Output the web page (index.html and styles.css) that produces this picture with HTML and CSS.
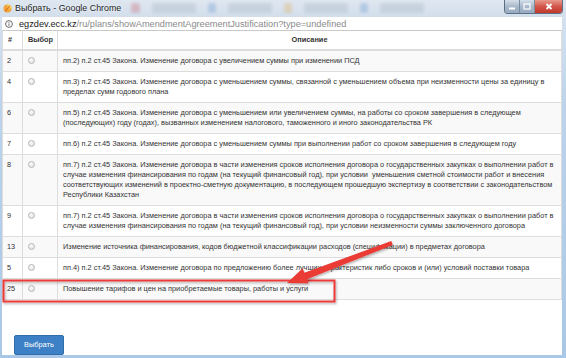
FILE: index.html
```html
<!DOCTYPE html>
<html lang="ru">
<head>
  <meta charset="UTF-8" />
  <title>Выбрать - Google Chrome</title>
  <link rel="stylesheet" href="styles.css">
</head>
<body>
  <div class="window">

    <!-- заголовок окна -->
    <div class="titlebar">
      <svg class="app-icon" width="9" height="9" viewBox="0 0 9 9">
        <circle cx="4.5" cy="4.5" r="4" fill="#f3a53a"/>
        <path d="M4.5 0.5 A4 4 0 0 1 8.5 4.5 L4.5 4.5 Z" fill="#fbd56a"/>
        <path d="M2 7.5 L6.8 1.8" stroke="#e07a1f" stroke-width="1.2"/>
      </svg>
      <span class="title">Выбрать - Google Chrome</span>
      <div class="glass">
        <span class="blob blob-red"></span>
        <span class="blob blob-tab"></span>
        <span class="blob blob-blue"></span>
        <span class="blob blob-tab"></span>
        <span class="blob blob-orange"></span>
        <span class="blob blob-tab"></span>
        <span class="blob blob-blue"></span>
        <span class="blob blob-tab"></span>
      </div>
      <div class="controls">
        <span class="ctl ctl-min">
          <svg width="8" height="6" viewBox="0 0 8 6"><rect x="1" y="3.5" width="6" height="2" fill="#fff"/></svg>
        </span>
        <span class="ctl ctl-max">
          <svg width="8" height="7" viewBox="0 0 8 7"><rect x="1" y="1" width="6" height="5" fill="none" stroke="#fff" stroke-width="1.2"/></svg>
        </span>
        <span class="ctl ctl-close">
          <svg width="8" height="7" viewBox="0 0 8 7"><path d="M1.5 1 L6.5 6 M6.5 1 L1.5 6" stroke="#fff" stroke-width="1.8"/></svg>
        </span>
      </div>
    </div>

    <div class="client">
      <!-- адресная строка -->
      <div class="omnibox">
        <svg width="8" height="8" viewBox="0 0 8 8">
          <circle cx="4" cy="4" r="3.4" fill="none" stroke="#5a5a5a" stroke-width="0.9"/>
          <rect x="3.55" y="3.4" width="0.9" height="2.5" fill="#5a5a5a"/>
          <rect x="3.55" y="1.9" width="0.9" height="0.9" fill="#5a5a5a"/>
        </svg>
        <span class="url"><span class="host">egzdev.ecc.kz</span>/ru/plans/showAmendmentAgreementJustification?type=undefined</span>
      </div>

      <!-- содержимое страницы -->
      <div class="page">
        <table class="grid">
          <thead>
            <tr>
              <th class="col-num">#</th>
              <th class="col-pick">Выбор</th>
              <th class="col-desc">Описание</th>
            </tr>
          </thead>
          <tbody>
            <tr>
              <td>2</td>
              <td><span class="radio"></span></td>
              <td>пп.2) п.2 ст.45 Закона. Изменение договора с увеличением суммы при изменении ПСД</td>
            </tr>
            <tr>
              <td>4</td>
              <td><span class="radio"></span></td>
              <td>пп.3) п.2 ст.45 Закона. Изменение договора с уменьшением суммы, связанной с уменьшением объема при неизменности цены за единицу в пределах сумм годового плана</td>
            </tr>
            <tr>
              <td>6</td>
              <td><span class="radio"></span></td>
              <td>пп.5) п.2 ст.45 Закона. Изменение договора с уменьшением или увеличением суммы, на работы со сроком завершения в следующем (последующих) году (годах), вызванных изменением налогового, таможенного и иного законодательства РК</td>
            </tr>
            <tr>
              <td>7</td>
              <td><span class="radio"></span></td>
              <td>пп.6) п.2 ст.45 Закона. Изменение договора с уменьшением суммы при выполнении работ со сроком завершения в следующем году</td>
            </tr>
            <tr>
              <td>8</td>
              <td><span class="radio"></span></td>
              <td>пп.7) п.2 ст.45 Закона. Изменение договора в части изменения сроков исполнения договора о государственных закупках о выполнении работ в случае изменения финансирования по годам (на текущий финансовый год), при условии&nbsp; уменьшения сметной стоимости работ и внесения соответствующих изменений в проектно-сметную документацию, в последующем прошедшую экспертизу в соответствии с законодательством Республики Казахстан</td>
            </tr>
            <tr>
              <td>9</td>
              <td><span class="radio"></span></td>
              <td>пп.7) п.2 ст.45 Закона. Изменение договора в части изменения сроков исполнения договора о государственных закупках о выполнении работ в случае изменения финансирования по годам (на текущий финансовый год), при условии неизменности суммы заключенного договора</td>
            </tr>
            <tr>
              <td>13</td>
              <td><span class="radio"></span></td>
              <td>Изменение источника финансирования, кодов бюджетной классификации расходов (спецификации) в предметах договора</td>
            </tr>
            <tr>
              <td>5</td>
              <td><span class="radio"></span></td>
              <td>пп.4) п.2 ст.45 Закона. Изменение договора по предложению более лучших характеристик либо сроков и (или) условий поставки товара</td>
            </tr>
            <tr>
              <td>25</td>
              <td><span class="radio"></span></td>
              <td>Повышение тарифов и цен на приобретаемые товары, работы и услуги</td>
            </tr>
          </tbody>
        </table>

        <div class="actions">
          <button class="btn-primary">Выбрать</button>
        </div>
      </div>
    </div>

    <!-- пометки поверх скриншота -->
    <svg class="marks" width="566" height="358" viewBox="0 0 566 358">
      <defs>
        <filter id="shade" x="-10%" y="-20%" width="130%" height="150%">
          <feDropShadow dx="1" dy="1.5" stdDeviation="1" flood-color="#000" flood-opacity="0.3"/>
        </filter>
      </defs>
      <rect x="3.5" y="280.5" width="331" height="21" fill="none" stroke="#ec3b3b" stroke-width="2" filter="url(#shade)"/>
      <polygon points="391.3,241.1 392.7,244.9 306.9,279.3 308.5,283.2 287,283 302.7,268.2 304.3,272.8" fill="#ea3a34" filter="url(#shade)"/>
    </svg>

  </div>
</body>
</html>
```

FILE: styles.css
```css
* {
  box-sizing: border-box;
}

body {
  margin: 0;
  font-family: "Liberation Sans", Arial, sans-serif;
  background-color: #c6d9ec;
}

.window {
  position: relative;
  width: 566px;
  height: 358px;
  display: flex;
  flex-direction: column;
  padding: 0 4px 3px 2px;
  background: linear-gradient(#d9e4f0, #bcd3eb 30%, #a9c7e6);
  overflow: hidden;
}

/* заголовок окна */
.titlebar {
  height: 17px;
  display: flex;
  align-items: center;
  background: linear-gradient(#dfe7f0, #d3dfec);
  margin: 0 -4px 0 -2px;
  padding: 0 4px 0 2px;
}

.app-icon {
  margin-left: 1px;
  flex-shrink: 0;
}

.title {
  margin-left: 3px;
  font-size: 8.9px;
  color: #1c1c1c;
  white-space: nowrap;
  text-shadow: 0 0 3px #fff;
}

.glass {
  flex-grow: 1;
  display: flex;
  align-items: center;
  gap: 12px;
  padding-left: 10px;
  height: 100%;
}

.blob {
  height: 10px;
  border-radius: 2px;
  filter: blur(1.5px);
  opacity: 0.35;
}

.blob-red {
  width: 9px;
  background-color: #c86b78;
}

.blob-tab {
  width: 44px;
  background-color: #a9b6c4;
}

.blob-blue {
  width: 8px;
  background-color: #6f9bd0;
}

.blob-orange {
  width: 8px;
  background-color: #e0b060;
}

.controls {
  display: flex;
  align-self: flex-start;
  margin-right: -1px;
  border: 1px solid #5f6f82;
  border-top: none;
  border-radius: 0 0 4px 4px;
  overflow: hidden;
}

.ctl {
  height: 13px;
  display: flex;
  justify-content: center;
  align-items: center;
}

.ctl-min, .ctl-max {
  width: 15px;
  background: linear-gradient(#d3dee9, #a8b8cb 50%, #98abc2);
  border-right: 1px solid #7a8a9d;
}

.ctl-close {
  width: 27px;
  background: linear-gradient(#e79a8c, #d2574a 50%, #c0392b);
}

/* адресная строка */
.client {
  flex-grow: 1;
  display: flex;
  flex-direction: column;
  background-color: #fff;
}

.omnibox {
  height: 15px;
  display: flex;
  align-items: center;
  gap: 6px;
  padding-left: 3px;
  border-top: 1px solid #d5dde6;
  border-bottom: 1px solid #c9c9c9;
  font-size: 9.2px;
  color: #8a8a8a;
  white-space: nowrap;
  overflow: hidden;
}

.host {
  color: #222;
}

/* таблица */
.page {
  flex-grow: 1;
}

.grid {
  width: 100%;
  table-layout: fixed;
  border-collapse: collapse;
  font-size: 7.35px;
  line-height: 10px;
  color: #333;
}

.grid th, .grid td {
  border: 1px solid #dddddd;
  padding: 5px;
  text-align: left;
  vertical-align: top;
}

.grid th {
  border-top: none;
  border-bottom: 2px solid #dddddd;
  padding-top: 4px;
  padding-bottom: 4px;
  font-weight: bold;
}

.grid td:first-child {
  padding-left: 4px;
}

.col-num {
  width: 20px;
}

.col-pick {
  width: 35px;
}

.grid th.col-desc {
  text-align: center;
}

.grid tbody tr:nth-child(odd) {
  background-color: #f9f9f9;
}

.radio {
  display: inline-block;
  width: 7px;
  height: 7px;
  margin-top: 1px;
  border-radius: 50%;
  border: 1px solid #b8b8b8;
  background: radial-gradient(circle at 40% 35%, #fdfdfd, #d9d9d9);
  vertical-align: top;
}

/* кнопка */
.actions {
  padding: 33px 0 0 12px;
}

.btn-primary {
  font-family: "Liberation Sans", Arial, sans-serif;
  font-size: 7.4px;
  line-height: 10px;
  padding: 4px 9px;
  color: #fff;
  background-color: #3d80c5;
  border: 1px solid #2f6ea9;
  border-radius: 2px;
  cursor: pointer;
}

/* пометки */
.marks {
  position: absolute;
  top: 0;
  left: 0;
}
```
